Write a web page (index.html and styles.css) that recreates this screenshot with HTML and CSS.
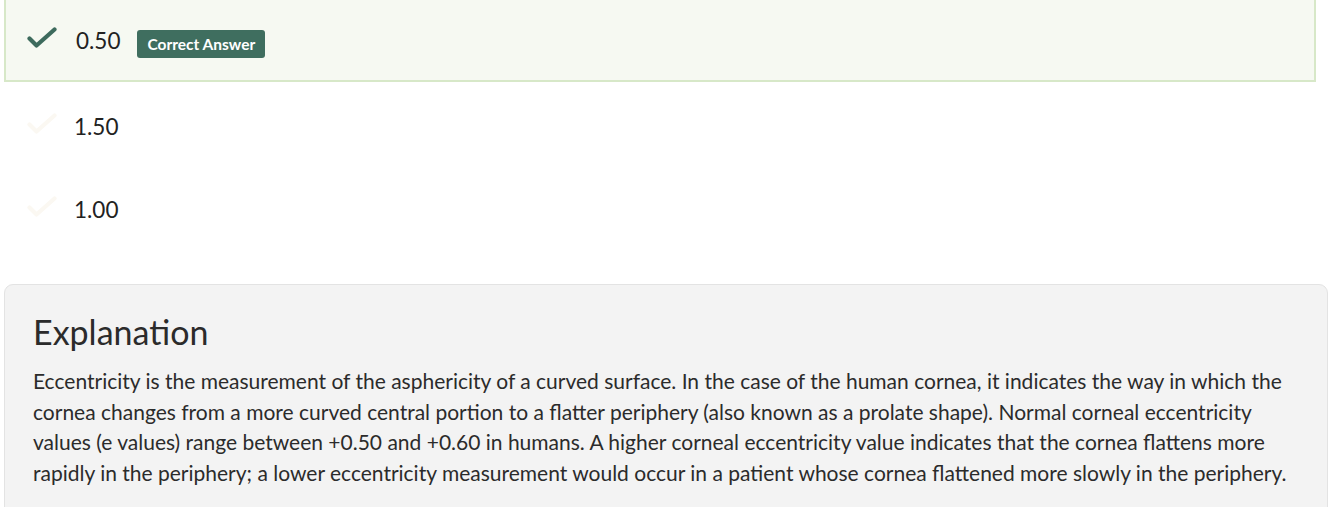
FILE: index.html
```html
<!DOCTYPE html>
<html lang="en">
<head>
<meta charset="utf-8">
<title>Question answers</title>
<link rel="stylesheet" href="styles.css">
</head>
<body>
<div class="page">
  <ul class="answers">
    <li class="answer answer--correct">
      <span class="check">
        <svg width="30" height="22" viewBox="0 0 30 22"><path d="M2.5 11.5 L9.5 18.5 L27.5 2.5" fill="none" stroke="currentColor" stroke-width="4.2" stroke-linecap="round" stroke-linejoin="round"/></svg>
      </span>
      <span class="answer-text">0.50</span>
      <span class="badge">Correct Answer</span>
    </li>
    <li class="answer">
      <span class="check check--faint">
        <svg width="30" height="22" viewBox="0 0 30 22"><path d="M2.5 11.5 L9.5 18.5 L27.5 2.5" fill="none" stroke="currentColor" stroke-width="4.2" stroke-linecap="round" stroke-linejoin="round"/></svg>
      </span>
      <span class="answer-text">1.50</span>
    </li>
    <li class="answer">
      <span class="check check--faint">
        <svg width="30" height="22" viewBox="0 0 30 22"><path d="M2.5 11.5 L9.5 18.5 L27.5 2.5" fill="none" stroke="currentColor" stroke-width="4.2" stroke-linecap="round" stroke-linejoin="round"/></svg>
      </span>
      <span class="answer-text">1.00</span>
    </li>
  </ul>
  <section class="explanation">
    <h2 class="explanation-title">Explanation</h2>
    <p class="explanation-body">Eccentricity is the measurement of the asphericity of a curved surface. In the case of the human cornea, it indicates the way in which the cornea changes from a more curved central portion to a flatter periphery (also known as a prolate shape). Normal corneal eccentricity values (e values) range between +0.50 and +0.60 in humans. A higher corneal eccentricity value indicates that the cornea flattens more rapidly in the periphery; a lower eccentricity measurement would occur in a patient whose cornea flattened more slowly in the periphery.</p>
  </section>
</div>
</body>
</html>
```

FILE: styles.css
```css
html, body {
  margin: 0;
  padding: 0;
  background: #ffffff;
}

body {
  font-family: Lato, "Open Sans", "Liberation Sans", sans-serif;
  color: #2b2b2b;
  overflow: hidden;
}

.page {
  padding: 0 6px 0 4px;
}

.answers {
  list-style: none;
  margin: -4px 12px 0 0;
  padding: 0;
}

.answer {
  display: flex;
  align-items: center;
  height: 83px;
  box-sizing: border-box;
  padding-left: 21px;
  border: 2px solid transparent;
}

.answer--correct {
  height: 86px;
  padding-top: 4px;
  background: #f6f9f2;
  border-color: #d7e8c8;
}

.answer--correct + .answer {
  margin-top: 3px;
}

.check {
  display: flex;
  width: 30px;
  height: 22px;
  color: #3d6b5d;
  margin-top: -6px;
  margin-right: 19px;
}

.check--faint {
  color: #fbf8f2;
}

.answer-text {
  font-size: 22.5px;
  line-height: 26px;
  color: #222;
}

.answer:not(.answer--correct) .answer-text {
  margin-left: -2px;
}

.badge {
  margin-left: 17px;
  margin-top: 5px;
  background: #3f6e5f;
  color: #ffffff;
  font-weight: 700;
  font-size: 15.5px;
  line-height: 28px;
  padding: 0 10px;
  border-radius: 3px;
}

.explanation {
  margin-top: 33px;
  background: #f3f3f3;
  border: 1px solid #e3e3e3;
  border-radius: 9px;
  padding: 26px 28px 40px;
}

.explanation-title {
  margin: 0 0 13px;
  font-weight: 400;
  font-size: 34px;
  line-height: 42px;
  color: #2b2b2b;
}

.explanation-body {
  margin: 0;
  font-size: 21px;
  line-height: 30.5px;
  color: #2b2b2b;
}
```
